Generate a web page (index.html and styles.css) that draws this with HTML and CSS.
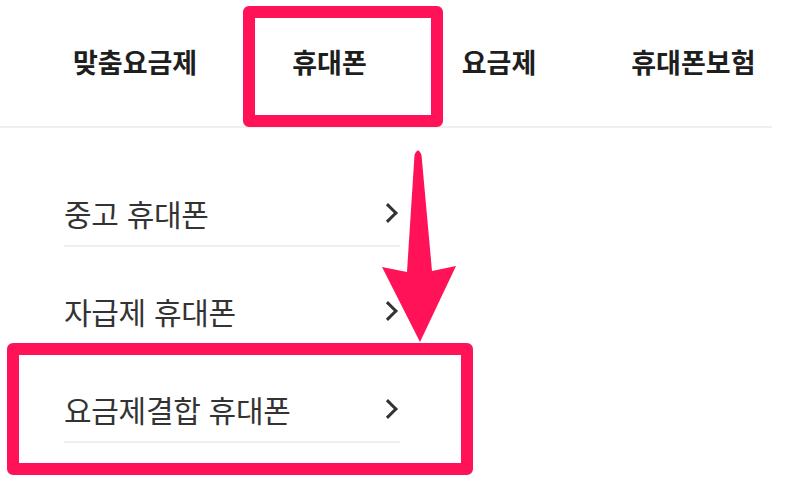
FILE: index.html
```html
<!DOCTYPE html>
<html lang="ko">
<head>
  <meta charset="UTF-8" />
  <meta name="viewport" content="width=device-width, initial-scale=1.0" />
  <title>휴대폰 메뉴</title>
  <link rel="stylesheet" href="styles.css">
</head>
<body>

  <header class="gnb">
    <nav class="gnb-links">
      <a href="#">맞춤요금제</a>
      <a href="#">휴대폰</a>
      <a href="#">요금제</a>
      <a href="#">휴대폰보험</a>
    </nav>
  </header>

  <main>
    <ul class="sub-menu">
      <li><a href="#"><span>중고 휴대폰</span><i class="chevron"></i></a></li>
      <li><a href="#"><span>자급제 휴대폰</span><i class="chevron"></i></a></li>
      <li><a href="#"><span>요금제결합 휴대폰</span><i class="chevron"></i></a></li>
    </ul>
  </main>

  <!-- Annotations -->
  <div class="mark mark-tab"></div>
  <div class="mark mark-item"></div>
  <svg class="mark-arrow" width="100" height="210" viewBox="0 0 100 210">
    <path d="M44.5 15 Q48 6 51.5 15 L62 131 L86 126 L50 202 L12 127 L37 132 Z" fill="#ff1258"/>
  </svg>

</body>
</html>
```

FILE: styles.css
```css
*, *::before, *::after {
  box-sizing: border-box;
}

:root {
  --color-mark: #ff1258;
  --color-line: #efefef;
}

html, body {
  margin: 0;
  padding: 0;
  background-color: #ffffff;
  font-family: 'Noto Sans CJK KR', 'Noto Sans', sans-serif;
  color: #222;
  overflow: hidden;
}

a {
  color: inherit;
  text-decoration: none;
}

.gnb {
  width: 772px;
  height: 128px;
  border-bottom: 2px solid var(--color-line);
}

.gnb-links {
  display: flex;
  align-items: center;
  height: 100%;
  padding-left: 73px;
  gap: 95px;
}

.gnb-links a {
  font-size: 27px;
  font-weight: 700;
  line-height: 30px;
  color: #1e1e1e;
  padding-bottom: 2px;
}

main {
  padding: 21px 0 0 64px;
}

.sub-menu {
  list-style: none;
  margin: 0;
  padding: 0;
  width: 336px;
}

.sub-menu li {
  border-bottom: 2px solid var(--color-line);
}

.sub-menu a {
  display: flex;
  justify-content: space-between;
  align-items: center;
  padding: 48px 0 16px;
  font-size: 30px;
  letter-spacing: -0.3px;
  line-height: 32px;
  color: #333;
}

.chevron {
  width: 14px;
  height: 14px;
  margin-right: 5px;
  border-top: 3.5px solid #333;
  border-right: 3.5px solid #333;
  transform: rotate(45deg);
}

.mark {
  position: absolute;
  border: 12px solid var(--color-mark);
  border-radius: 6px;
}

.mark-tab {
  left: 243px;
  top: 6px;
  width: 200px;
  height: 121px;
}

.mark-item {
  left: 7px;
  top: 343px;
  width: 466px;
  height: 132px;
}

.mark-arrow {
  position: absolute;
  left: 370px;
  top: 140px;
}
```
